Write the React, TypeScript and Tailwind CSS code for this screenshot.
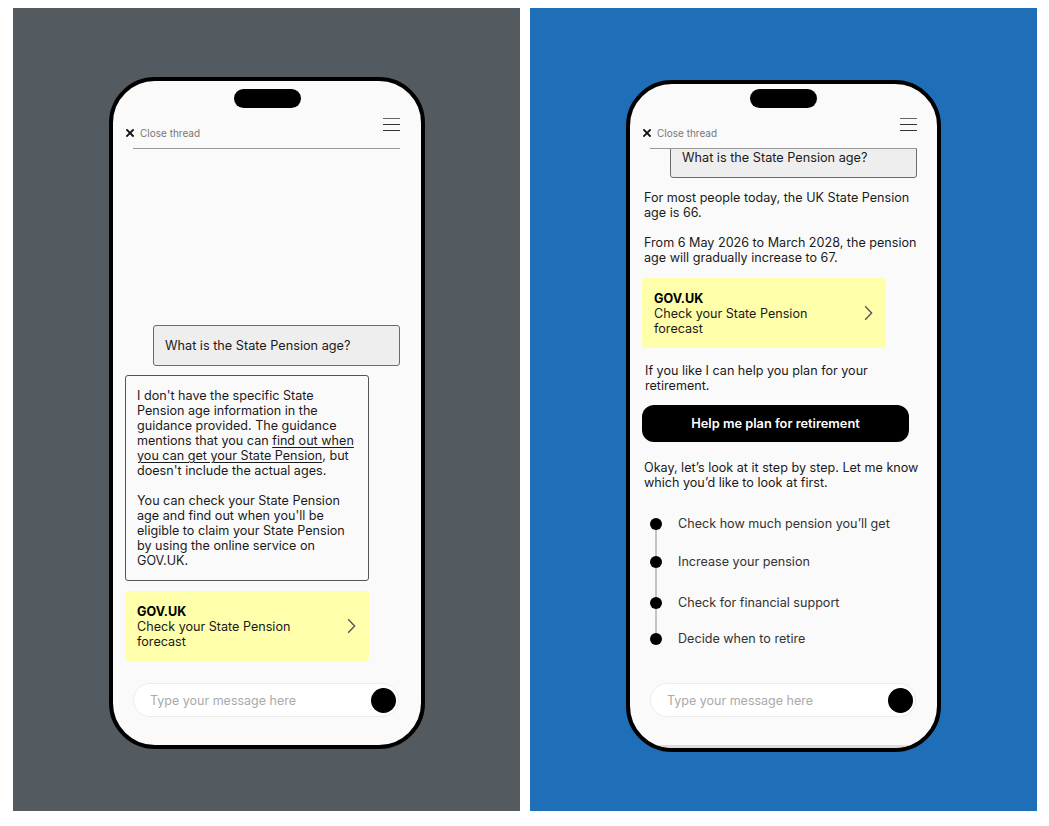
import React from "react";

const font = { fontFamily: "Inter, 'Noto Sans', sans-serif" };

function CloseX() {
  return (
    <svg width="8" height="8" viewBox="0 0 8 8" className="shrink-0">
      <path d="M1 1 L7 7 M7 1 L1 7" stroke="#111" strokeWidth="1.8" strokeLinecap="square" />
    </svg>
  );
}

function Chevron() {
  return (
    <svg width="9" height="16" viewBox="0 0 9 16" className="shrink-0">
      <path d="M1.2 1.2 L7.6 8 L1.2 14.8" fill="none" stroke="#555" strokeWidth="1.4" />
    </svg>
  );
}

function Header({ islandTop, padRight }: { islandTop: string; padRight: string }) {
  return (
    <>
      <div className={`${islandTop} mx-auto h-[19px] w-[67px] rounded-full bg-black shrink-0`} />
      <div className={`mt-[9px] flex h-[21px] items-end justify-between pl-[13px] ${padRight} shrink-0`}>
        <div className="flex items-center gap-[6px] h-[12px] translate-y-[1px]">
          <CloseX />
          <span className="text-[10px] leading-[12px] text-[#777]">Close thread</span>
        </div>
        <div className="self-start mt-[0.5px] flex w-[17px] flex-col gap-[4.5px]">
          <div className="h-[1.5px] bg-[#666]" />
          <div className="h-[1.5px] bg-[#333]" />
          <div className="h-[1.5px] bg-[#333]" />
        </div>
      </div>
    </>
  );
}

function YellowCard() {
  return (
    <div className="flex h-[70px] w-[244px] items-center justify-between rounded-[3px] bg-[#ffffab] pl-[12px] pr-[13px]">
      <div className="w-[180px] text-[12.6px] leading-[15px] text-[#1a1a1a]">
        <div className="font-bold text-black">GOV.UK</div>
        <div>Check your State Pension forecast</div>
      </div>
      <Chevron />
    </div>
  );
}

function InputBar() {
  return (
    <div className="flex h-[34px] w-[266px] items-center justify-between rounded-full border border-[#ececec] bg-white pl-[16px] pr-[2px]">
      <span className="text-[12.5px] leading-[15px] text-[#aaaaaa]">Type your message here</span>
      <div className="h-[25px] w-[25px] rounded-full bg-black" />
    </div>
  );
}

function UserBubble({ extra }: { extra: string }) {
  return (
    <div
      className={`${extra} flex h-[41px] w-[247px] items-center rounded-[3px] border border-[#6b6b6b] bg-[#eeeeee] pl-[11px] text-[12.7px] leading-[15px] text-[#1a1a1a] shrink-0`}
    >
      What is the State Pension age?
    </div>
  );
}

function LeftPhone() {
  return (
    <div className="flex h-[672px] w-[316px] flex-col overflow-hidden rounded-[46px] border-[4px] border-black bg-[#fafafa]">
      <Header islandTop="mt-[8px]" padRight="pr-[21px]" />
      <div className="ml-[20px] mr-[21px] mt-[10px] h-[1px] bg-[#999] shrink-0" />
      <div className="flex flex-1 flex-col justify-end">
        <UserBubble extra="ml-[40px]" />
        <div className="ml-[12px] mt-[9px] w-[244px] rounded-[3px] border border-[#555] bg-[#fafafa] px-[11px] pb-[12px] pt-[12px] text-[12.6px] leading-[15px] text-[#1a1a1a]">
          <p>
            I don't have the specific State Pension age information in the guidance provided. The guidance mentions that
            you can <span className="underline underline-offset-[1.5px]">find out when you can get your State Pension</span>,
            but doesn't include the actual ages.
          </p>
          <p className="mt-[15px]">
            You can check your State Pension age and find out when you'll be eligible to claim your State Pension by using
            the online service on GOV.UK.
          </p>
        </div>
        <div className="ml-[12px] mt-[10px]">
          <YellowCard />
        </div>
        <div className="ml-[20px] mt-[22px] mb-[28px]">
          <InputBar />
        </div>
      </div>
    </div>
  );
}

const steps: { label: string; mt: string }[] = [
  { label: "Check how much pension you\u2019ll get", mt: "mt-0" },
  { label: "Increase your pension", mt: "mt-[23px]" },
  { label: "Check for financial support", mt: "mt-[26px]" },
  { label: "Decide when to retire", mt: "mt-[21px]" },
];

function RightPhone() {
  return (
    <div className="flex h-[672px] w-[315px] flex-col overflow-hidden rounded-[46px] border-[4px] border-black bg-[#fafafa]">
      <Header islandTop="mt-[5px]" padRight="pr-[20px]" />
      <div className="ml-[20px] mr-[20px] mt-[10px] h-[1px] bg-[#999] shrink-0" />
      <div className="flex flex-1 flex-col overflow-hidden text-[12.6px] leading-[15px] text-[#1a1a1a]">
        <UserBubble extra="ml-[40px] -mt-[12px]" />
        <p className="ml-[14px] mt-[12px] w-[284px]">For most people today, the UK State Pension age is 66.</p>
        <p className="ml-[14px] mt-[15px] w-[284px]">From 6 May 2026 to March 2028, the pension age will gradually increase to 67.</p>
        <div className="ml-[12px] mt-[13px]">
          <YellowCard />
        </div>
        <p className="ml-[15px] mt-[15px] w-[255px]">If you like I can help you plan for your retirement.</p>
        <div className="ml-[12px] mt-[12px] flex h-[37px] w-[267px] items-center justify-center rounded-[12px] bg-black text-[12.8px] font-semibold text-white shrink-0">
          Help me plan for retirement
        </div>
        <p className="ml-[14px] mt-[18px] w-[290px]">
          Okay, let&rsquo;s look at it step by step. Let me know which you&rsquo;d like to look at first.
        </p>
        <div className="relative ml-[20px] mt-[26px] flex flex-col">
          <div className="absolute left-[5px] top-[7px] bottom-[7px] w-[2px] bg-[#c4c4c4]" />
          {steps.map((s) => (
            <div key={s.label} className={`relative flex h-[15px] items-center ${s.mt}`}>
              <div className="h-[12px] w-[12px] rounded-full bg-black" />
              <span className="ml-[16px] text-[#333]">{s.label}</span>
            </div>
          ))}
        </div>
      </div>
      <div className="ml-[20px] mt-[8px] mb-[28px] shrink-0">
        <InputBar />
      </div>
      <div className="h-[3px] bg-[#dcdcdc] shrink-0" />
    </div>
  );
}

export default function App() {
  return (
    <div className="flex h-[826px] w-[1049px] gap-[10px] bg-white pl-[13px] pt-[8px]" style={font}>
      <div className="h-[803px] w-[507px] bg-[#535b61] pl-[96px] pt-[69px]">
        <LeftPhone />
      </div>
      <div className="h-[803px] w-[507px] bg-[#1f6fb8] pl-[96px] pt-[72px]">
        <RightPhone />
      </div>
    </div>
  );
}
